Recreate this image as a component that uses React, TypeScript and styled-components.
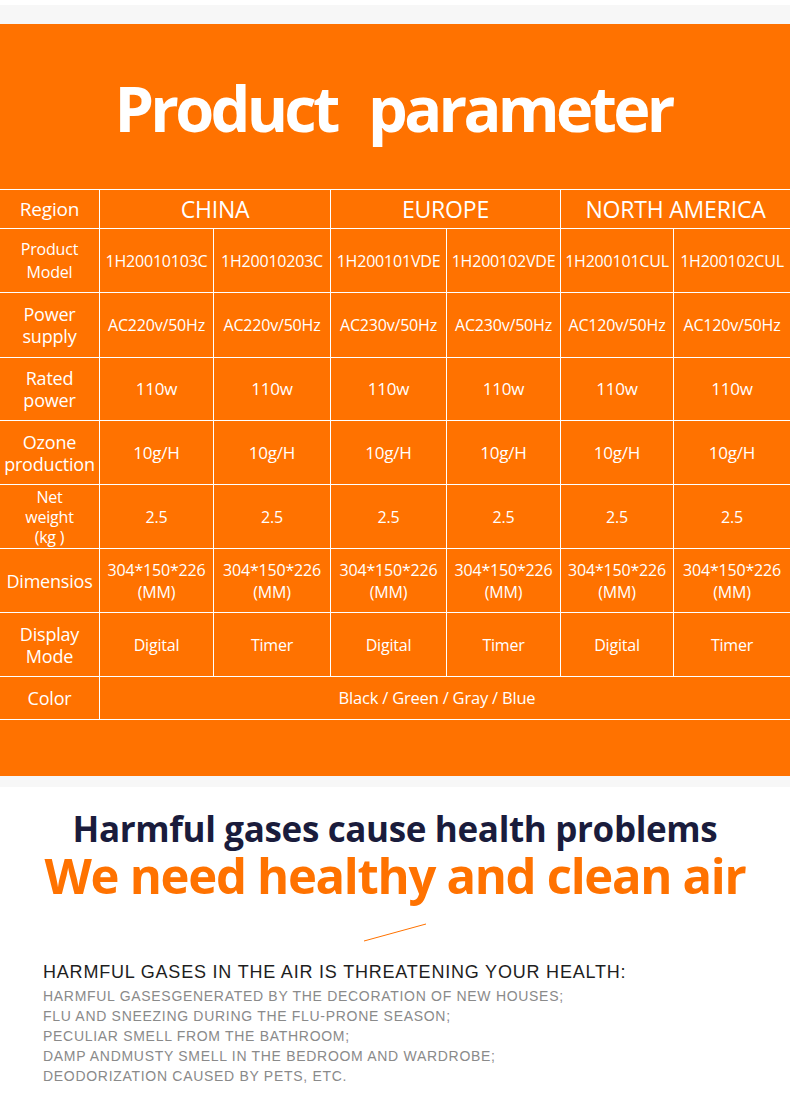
import React from "react";
import styled, { createGlobalStyle } from "styled-components";

const Global = createGlobalStyle`
  html, body { margin: 0; padding: 0; background: #fff; }
  body { font-family: "Open Sans", "Liberation Sans", sans-serif; }
  * { box-sizing: border-box; }
`;

const ORANGE = "#ff7200";

const Page = styled.div`
  width: 790px;
  display: flex;
  flex-direction: column;
`;

const WhiteTop = styled.div`
  height: 5px;
  background: #fff;
`;

const GrayStrip = styled.div<{ $h: number }>`
  height: ${(p) => p.$h}px;
  background: #f7f7f7;
`;

const OrangePanel = styled.section`
  background: ${ORANGE};
  display: flex;
  flex-direction: column;
  padding-bottom: 56px;
`;

const Title = styled.h1`
  margin: 0;
  height: 165px;
  display: flex;
  align-items: center;
  justify-content: center;
  padding-top: 2px;
  padding-right: 4px;
  color: #fff;
  font-family: "Open Sans", sans-serif;
  font-weight: 700;
  font-size: 63px;
  letter-spacing: -3.7px;
  word-spacing: 3px;
  white-space: pre;
`;

const Table = styled.div`
  display: grid;
  grid-template-columns: 100px 114px 117px 116px 114px 113px 116px;
  grid-template-rows: 39px 64px 65px 63px 64px 64px 64px 64px 43px;
  border-top: 1px solid #fff;
  color: #fff;
`;

const Cell = styled.div<{ $span?: number; $last?: boolean; $size?: number; $lh?: number; $shift?: number }>`
  grid-column: span ${(p) => p.$span ?? 1};
  border-bottom: 1px solid #fff;
  border-right: ${(p) => (p.$last ? "none" : "1px solid #fff")};
  display: flex;
  flex-direction: column;
  align-items: center;
  justify-content: center;
  text-align: center;
  padding-right: ${(p) => p.$shift ?? 0}px;
  font-size: ${(p) => p.$size ?? 15}px;
  line-height: ${(p) => p.$lh ?? 22}px;
  white-space: nowrap;
  letter-spacing: -0.2px;
`;

const WhiteSection = styled.section`
  display: flex;
  flex-direction: column;
  align-items: center;
  padding-top: 23px;
  padding-bottom: 20px;
`;

const Headline = styled.h2`
  margin: 0;
  font-family: "Open Sans", sans-serif;
  font-weight: 700;
  font-size: 35px;
  line-height: 38px;
  color: #1a1c3c;
  letter-spacing: -0.35px;
`;

const BigHeadline = styled.h2`
  margin: 0;
  font-family: "Open Sans", sans-serif;
  font-weight: 700;
  font-size: 49px;
  line-height: 54px;
  color: ${ORANGE};
  letter-spacing: -1.3px;
`;

const Slash = styled.svg`
  margin-top: 21px;
  display: block;
`;

const List = styled.div`
  align-self: stretch;
  padding-left: 43px;
  margin-top: 16px;
  font-family: "Liberation Sans", Arial, sans-serif;
`;

const ListTitle = styled.div`
  font-size: 18px;
  line-height: 28px;
  color: #1e1e1e;
  letter-spacing: 0.8px;
`;

const ListItem = styled.div`
  font-size: 14px;
  line-height: 20px;
  color: #8a8a8a;
  letter-spacing: 0.7px;
`;

type Row = { label: string[]; labelSize: number; labelLh: number; values: string[][]; size: number; lh?: number };

const rows: Row[] = [
  {
    label: ["Product", "Model"],
    labelSize: 16,
    labelLh: 23,
    values: [["1H20010103C"], ["1H20010203C"], ["1H200101VDE"], ["1H200102VDE"], ["1H200101CUL"], ["1H200102CUL"]],
    size: 16,
  },
  {
    label: ["Power", "supply"],
    labelSize: 18,
    labelLh: 22,
    values: ["AC220v/50Hz", "AC230v/50Hz", "AC120v/50Hz"].flatMap((v) => [[v], [v]]),
    size: 16,
  },
  { label: ["Rated", "power"], labelSize: 18, labelLh: 22, values: Array(6).fill(["110w"]), size: 17 },
  { label: ["Ozone", "production"], labelSize: 18, labelLh: 22, values: Array(6).fill(["10g/H"]), size: 17 },
  { label: ["Net", "weight", "(kg )"], labelSize: 16, labelLh: 20, values: Array(6).fill(["2.5"]), size: 16 },
  { label: ["Dimensios"], labelSize: 18, labelLh: 22, values: Array(6).fill(["304*150*226", "(MM)"]), size: 16, lh: 22 },
  {
    label: ["Display", "Mode"],
    labelSize: 18,
    labelLh: 22,
    values: [["Digital"], ["Timer"], ["Digital"], ["Timer"], ["Digital"], ["Timer"]],
    size: 16,
  },
];

const items = [
  "HARMFUL GASESGENERATED BY THE DECORATION OF NEW HOUSES;",
  "FLU AND SNEEZING DURING THE FLU-PRONE SEASON;",
  "PECULIAR SMELL FROM THE BATHROOM;",
  "DAMP ANDMUSTY SMELL IN THE BEDROOM AND WARDROBE;",
  "DEODORIZATION CAUSED BY PETS, ETC.",
];

const Lines = ({ lines }: { lines: string[] }) => (
  <>
    {lines.map((l, i) => (
      <span key={i}>{l}</span>
    ))}
  </>
);

export default function App() {
  return (
    <Page>
      <Global />
      <WhiteTop />
      <GrayStrip $h={19} />
      <OrangePanel>
        <Title>{"Product  parameter"}</Title>
        <Table>
          <Cell $size={19}>Region</Cell>
          <Cell $span={2} $size={23}>CHINA</Cell>
          <Cell $span={2} $size={23}>EUROPE</Cell>
          <Cell $span={2} $size={23} $last>NORTH AMERICA</Cell>
          {rows.map((r, ri) => (
            <React.Fragment key={ri}>
              <Cell $size={r.labelSize} $lh={r.labelLh}>
                <Lines lines={r.label} />
              </Cell>
              {r.values.map((v, vi) => (
                <Cell key={vi} $size={r.size} $lh={r.lh} $last={vi === 5}>
                  <Lines lines={v} />
                </Cell>
              ))}
            </React.Fragment>
          ))}
          <Cell $size={18}>Color</Cell>
          <Cell $span={6} $size={16.5} $shift={16} $last>Black / Green / Gray / Blue</Cell>
        </Table>
      </OrangePanel>
      <GrayStrip $h={11} />
      <WhiteSection>
        <Headline>Harmful gases cause health problems</Headline>
        <BigHeadline>We need healthy and clean air</BigHeadline>
        <Slash width="64" height="19" viewBox="0 0 64 19">
          <line x1="1" y1="18" x2="63" y2="1" stroke={ORANGE} strokeWidth="1" />
        </Slash>
        <List>
          <ListTitle>HARMFUL GASES IN THE AIR IS THREATENING YOUR HEALTH:</ListTitle>
          {items.map((t) => (
            <ListItem key={t}>{t}</ListItem>
          ))}
        </List>
      </WhiteSection>
    </Page>
  );
}
